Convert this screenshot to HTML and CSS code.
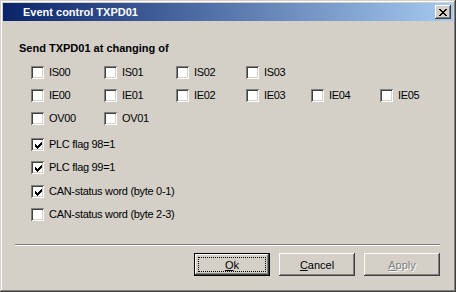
FILE: index.html
```html
<!DOCTYPE html>
<html lang="en">
<head>
    <meta charset="UTF-8">
    <title>Event control TXPD01</title>
    <link rel="stylesheet" href="styles.css">
</head>
<body>
    <div class="window">
        <div class="titlebar">
            <span class="title">Event control TXPD01</span>
            <span class="close-btn">
                <svg width="8" height="7" viewBox="0 0 8 7"><path d="M0 0h2v1H0zM6 0h2v1H6zM1 1h2v1H1zM5 1h2v1H5zM2 2h4v1H2zM3 3h2v1H3zM2 4h4v1H2zM1 5h2v1H1zM5 5h2v1H5zM0 6h2v1H0zM6 6h2v1H6z" fill="#000"/></svg>
            </span>
        </div>

        <div class="content">
            <div class="heading">Send TXPD01 at changing of</div>

            <div class="bit-grid">
                <label class="check"><span class="box"></span>IS00</label>
                <label class="check"><span class="box"></span>IS01</label>
                <label class="check"><span class="box"></span>IS02</label>
                <label class="check"><span class="box"></span>IS03</label>
                <span></span>
                <span></span>

                <label class="check"><span class="box"></span>IE00</label>
                <label class="check"><span class="box"></span>IE01</label>
                <label class="check"><span class="box"></span>IE02</label>
                <label class="check"><span class="box"></span>IE03</label>
                <label class="check"><span class="box"></span>IE04</label>
                <label class="check"><span class="box"></span>IE05</label>

                <label class="check"><span class="box"></span>OV00</label>
                <label class="check"><span class="box"></span>OV01</label>
            </div>

            <div class="flag-list">
                <label class="check"><span class="box checked"><svg width="9" height="9" viewBox="0 0 9 9"><path d="M1 3h1v3H1zM2 4h1v3H2zM3 5h1v3H3zM4 4h1v3H4zM5 3h1v3H5zM6 2h1v3H6zM7 1h1v3H7z" fill="#000"/></svg></span>PLC flag 98=1</label>
                <label class="check"><span class="box checked"><svg width="9" height="9" viewBox="0 0 9 9"><path d="M1 3h1v3H1zM2 4h1v3H2zM3 5h1v3H3zM4 4h1v3H4zM5 3h1v3H5zM6 2h1v3H6zM7 1h1v3H7z" fill="#000"/></svg></span>PLC flag 99=1</label>
            </div>

            <div class="can-list">
                <label class="check"><span class="box checked"><svg width="9" height="9" viewBox="0 0 9 9"><path d="M1 3h1v3H1zM2 4h1v3H2zM3 5h1v3H3zM4 4h1v3H4zM5 3h1v3H5zM6 2h1v3H6zM7 1h1v3H7z" fill="#000"/></svg></span>CAN-status word (byte 0-1)</label>
                <label class="check"><span class="box"></span>CAN-status word (byte 2-3)</label>
            </div>

            <div class="separator"></div>

            <div class="buttons">
                <button class="btn default"><span class="focus"><u>O</u>k</span></button>
                <button class="btn"><u>C</u>ancel</button>
                <button class="btn disabled"><u>A</u>pply</button>
            </div>
        </div>
    </div>
</body>
</html>
```

FILE: styles.css
```css
body {
    margin: 0;
    background-color: #d4d0c8;
    font-family: "Liberation Sans", Arial, sans-serif;
    font-size: 11px;
    color: #000;
}

.window {
    width: 456px;
    height: 292px;
    box-sizing: border-box;
    padding: 3px;
    background-color: #d4d0c8;
    box-shadow: inset -1px -1px #404040, inset 1px 1px #d4d0c8,
                inset -2px -2px #808080, inset 2px 2px #ffffff;
}

.titlebar {
    height: 18px;
    display: flex;
    align-items: center;
    justify-content: space-between;
    padding: 0 2px 0 20px;
    background: linear-gradient(to right, #0a246a, #a6caf0);
}

.title {
    color: #fff;
    font-weight: bold;
    font-size: 11px;
}

.close-btn {
    width: 16px;
    height: 14px;
    box-sizing: border-box;
    display: flex;
    align-items: center;
    justify-content: center;
    background-color: #d4d0c8;
    box-shadow: inset -1px -1px #404040, inset 1px 1px #ffffff,
                inset -2px -2px #808080;
}

.content {
    padding: 0 13px 0 12px;
}

.heading {
    font-weight: bold;
    line-height: 13px;
    margin-top: 21px;
    padding-left: 4px;
}

.check {
    display: flex;
    align-items: center;
    height: 13px;
    line-height: 13px;
    white-space: nowrap;
    letter-spacing: -0.3px;
}

.box {
    width: 13px;
    height: 13px;
    box-sizing: border-box;
    margin-right: 5px;
    flex-shrink: 0;
    display: flex;
    align-items: center;
    justify-content: center;
    background-color: #fff;
    box-shadow: inset 1px 1px #808080, inset -1px -1px #ffffff,
                inset 2px 2px #404040, inset -2px -2px #d4d0c8;
}

.box svg {
    margin: 2px 0 0 2px;
}

.bit-grid {
    display: grid;
    grid-template-columns: 73px 72px 70px 65px 69px 60px;
    row-gap: 10px;
    margin-top: 11px;
    padding-left: 16px;
}

.flag-list,
.can-list {
    display: flex;
    flex-direction: column;
    gap: 10px;
    padding-left: 16px;
}

.flag-list {
    margin-top: 13px;
}

.can-list {
    margin-top: 11px;
}

.separator {
    margin-top: 23px;
    height: 1px;
    background-color: #808080;
    border-bottom: 1px solid #ffffff;
}

.buttons {
    display: flex;
    justify-content: flex-end;
    gap: 9px;
    margin-top: 7px;
}

.btn {
    width: 76px;
    height: 23px;
    padding: 0;
    border: none;
    background-color: #d4d0c8;
    font-family: "Liberation Sans", Arial, sans-serif;
    font-size: 11px;
    color: #000;
    box-shadow: inset -1px -1px #404040, inset 1px 1px #ffffff,
                inset -2px -2px #808080;
}

.btn.default {
    box-shadow: inset 0 0 0 1px #000, inset -2px -2px #404040,
                inset 2px 2px #ffffff, inset -3px -3px #808080;
    display: flex;
    padding: 4px;
}

.focus {
    flex: 1;
    display: flex;
    align-items: center;
    justify-content: center;
    border: 1px dotted #000;
}

.btn.disabled {
    color: #808080;
    text-shadow: 1px 1px #ffffff;
}
```
